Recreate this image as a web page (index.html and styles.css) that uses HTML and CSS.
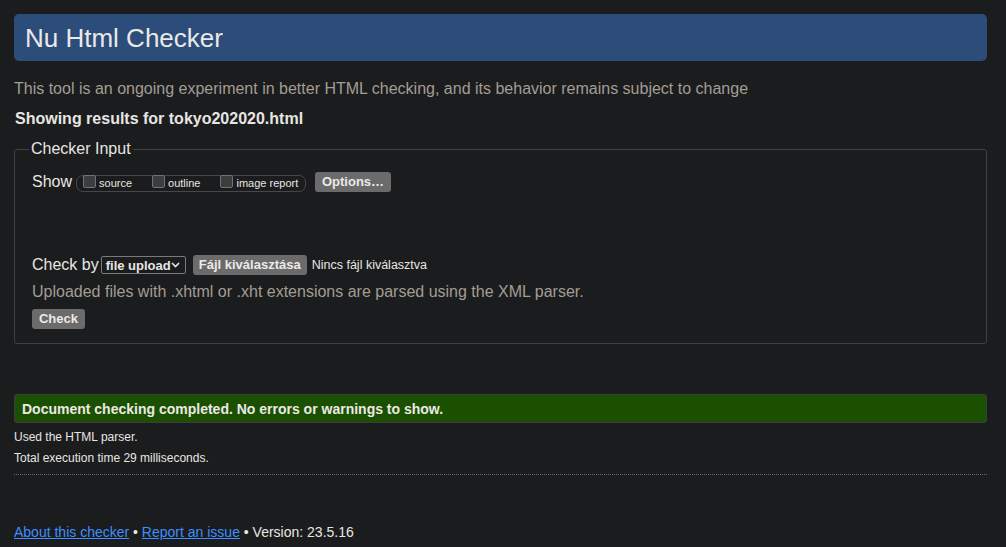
FILE: index.html
```html
<!DOCTYPE html>
<html lang="hu">
<head>
<meta charset="utf-8">
<title>Nu Html Checker</title>
<link rel="stylesheet" href="styles.css">
</head>
<body>
<header class="banner"><h1>Nu Html Checker</h1></header>
<p class="intro">This tool is an ongoing experiment in better HTML checking, and its behavior remains subject to change</p>
<p class="showing">Showing results for tokyo202020.html</p>
<form class="input-form">
  <fieldset class="checker">
    <legend>Checker Input</legend>
    <div class="show-row">
      <span class="lbl">Show</span>
      <fieldset class="pill">
        <label class="opt opt-source"><input type="checkbox"><span>source</span></label>
        <label class="opt opt-outline"><input type="checkbox"><span>outline</span></label>
        <label class="opt opt-image"><input type="checkbox"><span>image report</span></label>
      </fieldset>
      <button type="button" class="btn options">Options…</button>
    </div>
    <div class="check-row">
      <span class="lbl">Check by</span>
      <span class="select">file upload<svg width="9" height="6" viewBox="0 0 9 6"><path d="M1 1l3.5 3.5L8 1" fill="none" stroke="#e8e6e3" stroke-width="1.6"/></svg></span>
      <button type="button" class="btn file">Fájl kiválasztása</button>
      <span class="nofile">Nincs fájl kiválasztva</span>
    </div>
    <p class="hint">Uploaded files with .xhtml or .xht extensions are parsed using the XML parser.</p>
    <button type="button" class="btn check">Check</button>
  </fieldset>
</form>
<div class="success">Document checking completed. No errors or warnings to show.</div>
<p class="meta first">Used the HTML parser.</p>
<p class="meta">Total execution time 29 milliseconds.</p>
<hr class="dots">
<footer class="foot"><a href="#">About this checker</a> • <a href="#">Report an issue</a> • Version: 23.5.16</footer>
</body>
</html>
```
FILE: styles.css
```css
html { background: #1b1c1e; }
body {
  margin: 0;
  padding: 14px 19px 0 14px;
  font-family: "Liberation Sans", Arial, sans-serif;
  color: #e8e6e3;
  background: #1b1c1e;
}
.banner {
  background: #2c4c7a;
  border-radius: 5px;
  height: 47px;
  display: flex;
  align-items: center;
  padding-left: 11px;
}
.banner h1 {
  margin: 0;
  font-size: 26px;
  font-weight: normal;
  color: #ebe9e6;
  line-height: 30px;
}
.intro {
  margin: 19px 0 0 0;
  font-size: 16px;
  line-height: 18px;
  color: #a39d93;
}
.showing {
  margin: 12px 0 0 1px;
  font-size: 16px;
  line-height: 18px;
  font-weight: bold;
  color: #e8e6e3;
}
.input-form { margin-top: 12px; }
.checker {
  margin: 0;
  border: 1px solid #3e4043;
  border-radius: 3px;
  padding: 0 17px 14px 17px;
  min-width: 0;
}
.checker legend {
  font-size: 16px;
  line-height: 18px;
  padding: 0 2px;
  margin-left: -3px;
  color: #e8e6e3;
}
.show-row {
  display: flex;
  align-items: center;
  margin-top: 13px;
  height: 22px;
}
.lbl { font-size: 16px; line-height: 18px; white-space: nowrap; }
.pill {
  margin: 2px 0 0 4px;
  padding: 0 6px 0 6px;
  border: 1px solid #45474a;
  border-radius: 7px;
  height: 17px;
  display: flex;
  align-items: center;
  flex-wrap: nowrap;
  flex-shrink: 0;
  box-sizing: border-box;
  width: 230px;
  min-width: 0;
}
.opt {
  display: inline-flex;
  align-items: center;
  font-size: 11px;
  color: #e8e6e3;
  white-space: nowrap;
  flex-shrink: 0;
}
.opt input {
  appearance: none;
  -webkit-appearance: none;
  width: 13px;
  height: 13px;
  margin: 0 3px 0 0;
  border: 1px solid #727272;
  border-radius: 2px;
  background: #3b3d3f;
  box-sizing: border-box;
  position: relative;
  top: -2px;
  flex-shrink: 0;
}
.opt-source { margin-right: 20px; }
.opt-outline { margin-right: 20px; }
.btn {
  font-family: "Liberation Sans", Arial, sans-serif;
  font-size: 13px;
  font-weight: bold;
  color: #ece9e6;
  background: #6b6b6b;
  border: none;
  border-radius: 3px;
  height: 20px;
  padding: 0 8px;
  line-height: 20px;
  white-space: nowrap;
  flex-shrink: 0;
}
.options { margin-left: 9px; width: 76px; padding: 0; }
.check-row {
  display: flex;
  align-items: center;
  margin-top: 61px;
  height: 22px;
}
.select {
  margin-left: 2px;
  height: 18px;
  box-sizing: border-box;
  width: 85px;
  border: 1px solid #7a7a7a;
  border-radius: 2px;
  display: inline-flex;
  align-items: center;
  justify-content: space-between;
  padding: 0 5px 0 4px;
  font-size: 13px;
  font-weight: bold;
  white-space: nowrap;
  flex-shrink: 0;
}
.file { margin-left: 7px; width: 114px; padding: 0; }
.nofile { margin-left: 5px; font-size: 12.5px; white-space: nowrap; }
.hint {
  margin: 7px 0 0 0;
  font-size: 16px;
  line-height: 18px;
  color: #a39d93;
}
.check { margin-top: 8px; width: 53px; padding: 0; }
.success {
  margin-top: 50px;
  background: #1a5000;
  border: 1px solid #3c3f42;
  border-radius: 3px;
  height: 29px;
  box-sizing: border-box;
  display: flex;
  align-items: center;
  padding-left: 7px;
  font-size: 14px;
  font-weight: bold;
  color: #ece9e6;
}
.meta {
  margin: 0;
  font-size: 12px;
  line-height: 21px;
  color: #e8e6e3;
}
.meta.first { margin-top: 4px; }
.dots {
  margin: 5px 0 0 0;
  border: none;
  border-top: 1px dotted #6e6a64;
  height: 0;
}
.foot {
  margin-top: 49px;
  font-size: 14px;
  line-height: 16px;
  color: #e8e6e3;
}
.foot a { color: #3d8fff; text-decoration: underline; }
```
